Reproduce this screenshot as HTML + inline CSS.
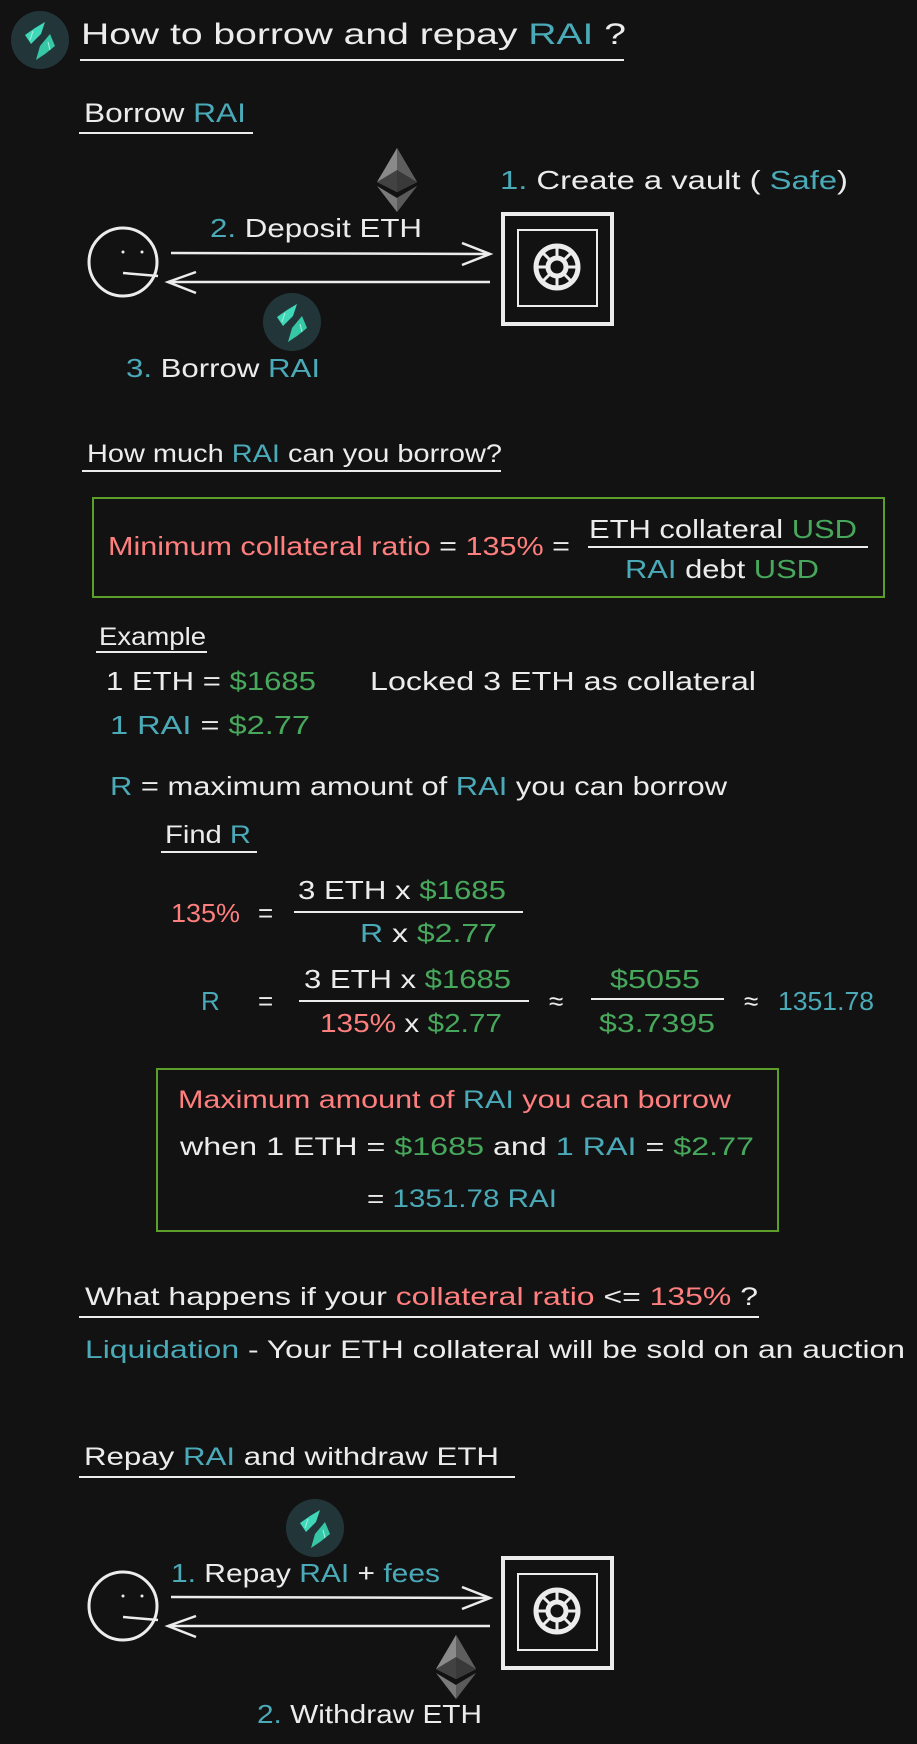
<!DOCTYPE html>
<html><head><meta charset="utf-8"><style>
html,body{margin:0;padding:0;background:#121212;}
svg{display:block}
text{font-family:"Liberation Sans",sans-serif;fill:#ececec;}
.c{fill:#4aaab8}.r{fill:#ff7e7e}.g{fill:#47a85c}
</style></head><body>
<svg width="917" height="1744" viewBox="0 0 917 1744" xmlns="http://www.w3.org/2000/svg">
<defs>
<g id="logo">
<circle cx="0" cy="0" r="29" fill="#22363a"/>
<polygon points="-15,-5 -5,-12 5,-18 1,-6 -9,4" fill="#3fd8b8"/>
<polygon points="10,-6 15,6 5,14 -4,20 0,6" fill="#36c7a6"/>
<line x1="-7" y1="-9" x2="-10" y2="0" stroke="#a9f0e0" stroke-width="1"/>
<line x1="8" y1="2" x2="10" y2="10" stroke="#a9f0e0" stroke-width="1"/>
</g>
<g id="eth">
<polygon points="0,0 20,34 0,44 -20,34" fill="#8a8a8a"/>
<polygon points="0,0 20,34 0,44" fill="#5e5e5e"/>
<polygon points="0,22 20,34 0,44 -20,34" fill="#2f2f2f" opacity="0.8"/>
<polygon points="-20,38 0,50 20,38 0,64" fill="#7a7a7a"/>
<polygon points="0,50 20,38 0,64" fill="#5a5a5a"/>
</g>
<g id="safe">
<rect x="503" y="214" width="109" height="110" fill="none" stroke="#ececec" stroke-width="4"/>
<rect x="518" y="230" width="79" height="76" fill="none" stroke="#ececec" stroke-width="2"/>
<circle cx="557" cy="267" r="21" fill="none" stroke="#ececec" stroke-width="5"/>
<circle cx="557" cy="267" r="9" fill="none" stroke="#ececec" stroke-width="5"/>
<g stroke="#ececec" stroke-width="3">
<line x1="557" y1="246" x2="557" y2="258"/><line x1="557" y1="276" x2="557" y2="288"/>
<line x1="536" y1="267" x2="548" y2="267"/><line x1="566" y1="267" x2="578" y2="267"/>
<line x1="542" y1="252" x2="551" y2="261"/><line x1="563" y1="273" x2="572" y2="282"/>
<line x1="572" y1="252" x2="563" y2="261"/><line x1="551" y1="273" x2="542" y2="282"/>
</g>
</g>
<g id="face" fill="none" stroke="#ececec" stroke-width="3">
<circle cx="123" cy="262" r="34"/>
<circle cx="123" cy="252" r="1.5" fill="#ececec" stroke="none"/>
<circle cx="142" cy="252" r="1.5" fill="#ececec" stroke="none"/>
<line x1="123" y1="273" x2="158" y2="276" stroke-width="2.5"/>
</g>
<g id="arrows" fill="none" stroke="#ececec" stroke-width="2.5">
<line x1="171" y1="253" x2="490" y2="254"/>
<polyline points="462,243 490,254 462,265"/>
<line x1="168" y1="282" x2="490" y2="282"/>
<polyline points="196,272 168,282 196,293"/>
</g>
</defs>

<use href="#logo" x="40" y="40"/>
<text x="81" y="44" font-size="30" textLength="545" lengthAdjust="spacingAndGlyphs">How to borrow and repay <tspan class="c">RAI</tspan> ?</text>
<line x1="80" y1="60" x2="624" y2="60" stroke="#ececec" stroke-width="2"/>

<text x="84" y="122" font-size="27" textLength="162" lengthAdjust="spacingAndGlyphs">Borrow <tspan class="c">RAI</tspan></text>
<line x1="79" y1="133" x2="253" y2="133" stroke="#ececec" stroke-width="2"/>

<use href="#eth" x="397" y="148"/>
<text x="500" y="189" font-size="26" textLength="348" lengthAdjust="spacingAndGlyphs"><tspan class="c">1.</tspan> Create a vault ( <tspan class="c">Safe</tspan>)</text>
<text x="210" y="237" font-size="26" textLength="212" lengthAdjust="spacingAndGlyphs"><tspan class="c">2.</tspan> Deposit  ETH</text>
<use href="#face"/>
<use href="#arrows"/>
<use href="#safe"/>
<use href="#logo" x="292" y="322"/>
<text x="126" y="377" font-size="26" textLength="194" lengthAdjust="spacingAndGlyphs"><tspan class="c">3.</tspan> Borrow <tspan class="c">RAI</tspan></text>

<text x="87" y="462" font-size="25" textLength="415" lengthAdjust="spacingAndGlyphs">How much <tspan class="c">RAI</tspan> can you borrow?</text>
<line x1="82" y1="471" x2="501" y2="471" stroke="#ececec" stroke-width="2"/>

<rect x="93" y="498" width="791" height="99" fill="none" stroke="#5c9e2a" stroke-width="2"/>
<text x="108" y="555" font-size="26" textLength="462" lengthAdjust="spacingAndGlyphs"><tspan class="r">Minimum collateral ratio</tspan> = <tspan class="r">135%</tspan> =</text>
<text x="589" y="538" font-size="26" textLength="268" lengthAdjust="spacingAndGlyphs">ETH collateral <tspan class="g">USD</tspan></text>
<line x1="588" y1="547" x2="868" y2="547" stroke="#ececec" stroke-width="2"/>
<text x="625" y="578" font-size="26" textLength="194" lengthAdjust="spacingAndGlyphs"><tspan class="c">RAI</tspan> debt <tspan class="g">USD</tspan></text>

<text x="99" y="645" font-size="25" textLength="107" lengthAdjust="spacingAndGlyphs">Example</text>
<line x1="96" y1="652" x2="207" y2="652" stroke="#ececec" stroke-width="2"/>
<text x="106" y="690" font-size="26" textLength="210" lengthAdjust="spacingAndGlyphs">1 ETH  =  <tspan class="g">$1685</tspan></text>
<text x="370" y="690" font-size="26" textLength="386" lengthAdjust="spacingAndGlyphs">Locked 3 ETH as collateral</text>
<text x="110" y="734" font-size="26" textLength="200" lengthAdjust="spacingAndGlyphs"><tspan class="c">1 RAI</tspan>  =  <tspan class="g">$2.77</tspan></text>
<text x="110" y="795" font-size="26" textLength="617" lengthAdjust="spacingAndGlyphs"><tspan class="c">R</tspan> = maximum amount of <tspan class="c">RAI</tspan> you can borrow</text>

<text x="165" y="843" font-size="25" textLength="86" lengthAdjust="spacingAndGlyphs">Find <tspan class="c">R</tspan></text>
<line x1="161" y1="852" x2="257" y2="852" stroke="#ececec" stroke-width="2"/>

<text x="171" y="922" font-size="26" textLength="69" lengthAdjust="spacingAndGlyphs" class="r">135%</text>
<text x="258" y="922" font-size="26">=</text>
<text x="298" y="899" font-size="26" textLength="208" lengthAdjust="spacingAndGlyphs">3 ETH x <tspan class="g">$1685</tspan></text>
<line x1="294" y1="912" x2="523" y2="912" stroke="#ececec" stroke-width="2"/>
<text x="360" y="942" font-size="26" textLength="137" lengthAdjust="spacingAndGlyphs"><tspan class="c">R</tspan> x <tspan class="g">$2.77</tspan></text>

<text x="201" y="1010" font-size="26" class="c">R</text>
<text x="258" y="1010" font-size="26">=</text>
<text x="304" y="988" font-size="26" textLength="207" lengthAdjust="spacingAndGlyphs">3 ETH x <tspan class="g">$1685</tspan></text>
<line x1="299" y1="1001" x2="529" y2="1001" stroke="#ececec" stroke-width="2"/>
<text x="320" y="1032" font-size="26" textLength="182" lengthAdjust="spacingAndGlyphs"><tspan class="r">135%</tspan> x <tspan class="g">$2.77</tspan></text>
<text x="549" y="1010" font-size="26">≈</text>
<text x="610" y="988" font-size="26" textLength="90" lengthAdjust="spacingAndGlyphs" class="g">$5055</text>
<line x1="591" y1="999" x2="724" y2="999" stroke="#ececec" stroke-width="2"/>
<text x="599" y="1032" font-size="26" textLength="116" lengthAdjust="spacingAndGlyphs" class="g">$3.7395</text>
<text x="744" y="1010" font-size="26">≈</text>
<text x="778" y="1010" font-size="26" textLength="96" lengthAdjust="spacingAndGlyphs" class="c">1351.78</text>

<rect x="157" y="1069" width="621" height="162" fill="none" stroke="#5c9e2a" stroke-width="2"/>
<text x="178" y="1108" font-size="25" textLength="553" lengthAdjust="spacingAndGlyphs"><tspan class="r">Maximum amount of</tspan> <tspan class="c">RAI</tspan> <tspan class="r">you can borrow</tspan></text>
<text x="180" y="1155" font-size="25" textLength="574" lengthAdjust="spacingAndGlyphs">when 1 ETH = <tspan class="g">$1685</tspan> and <tspan class="c">1 RAI</tspan> = <tspan class="g">$2.77</tspan></text>
<text x="367" y="1207" font-size="25" textLength="190" lengthAdjust="spacingAndGlyphs">= <tspan class="c">1351.78 RAI</tspan></text>

<text x="85" y="1305" font-size="25" textLength="673" lengthAdjust="spacingAndGlyphs">What happens if your <tspan class="r">collateral ratio</tspan> &lt;= <tspan class="r">135%</tspan> ?</text>
<line x1="79" y1="1317" x2="759" y2="1317" stroke="#ececec" stroke-width="2"/>
<text x="85" y="1358" font-size="25" textLength="820" lengthAdjust="spacingAndGlyphs"><tspan class="c">Liquidation</tspan> - Your ETH collateral will be sold on an auction</text>

<text x="84" y="1465" font-size="25" textLength="415" lengthAdjust="spacingAndGlyphs">Repay <tspan class="c">RAI</tspan>  and withdraw ETH</text>
<line x1="79" y1="1477" x2="515" y2="1477" stroke="#ececec" stroke-width="2"/>
<use href="#logo" x="315" y="1528"/>
<text x="171" y="1582" font-size="26" textLength="269" lengthAdjust="spacingAndGlyphs"><tspan class="c">1.</tspan> Repay <tspan class="c">RAI</tspan> + <tspan class="c">fees</tspan></text>
<g transform="translate(0,1344)">
<use href="#face"/>
<use href="#arrows"/>
<use href="#safe"/>
</g>
<use href="#eth" x="456" y="1635"/>
<text x="257" y="1723" font-size="26" textLength="225" lengthAdjust="spacingAndGlyphs"><tspan class="c">2.</tspan> Withdraw ETH</text>
</svg>
</body></html>
